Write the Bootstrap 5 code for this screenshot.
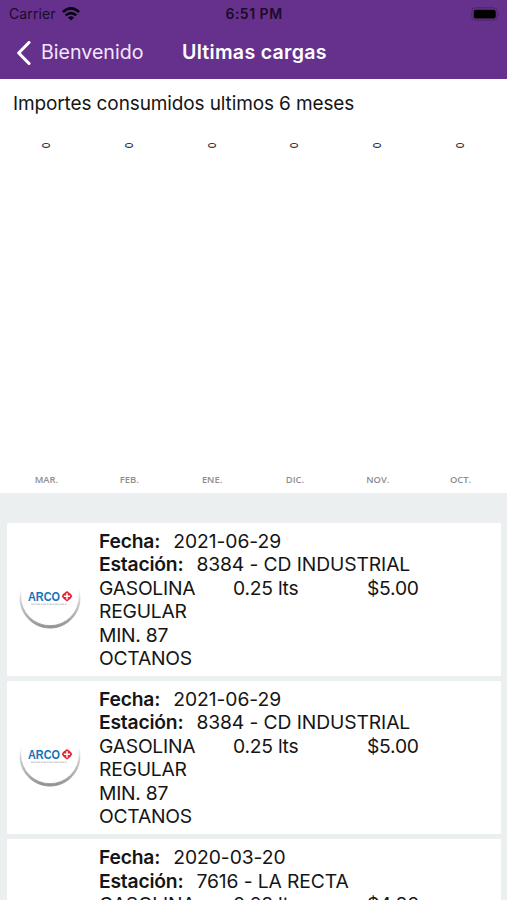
<!DOCTYPE html>
<html lang="es">
<head>
<meta charset="utf-8">
<meta name="viewport" content="width=device-width, initial-scale=1">
<title>Ultimas cargas</title>
<link rel="stylesheet" href="https://cdn.jsdelivr.net/npm/bootstrap@5.3.0/dist/css/bootstrap.min.css">
<style>
body{font-family:Inter,"Liberation Sans",sans-serif;height:900px;background:#ebeff0;color:#151515}
.topbar{background:#65318d;height:79px}
.status{height:27px;font-size:14px;color:#1b0b28;display:grid;grid-template-columns:1fr auto 1fr;padding:0 6px 0 9px}
.carrier{letter-spacing:.1px}
.clock{font-weight:600;letter-spacing:.5px;margin-left:-2px}
.titlebar{height:52px;font-size:19.6px;color:#fff;padding-left:16px}
.back{color:#f3e6fb;width:166px}
.heading{font-weight:600;letter-spacing:.27px}
.chart{height:414px;background:#fff}
.chart-title{font-size:19px;letter-spacing:-.12px;padding:12px 0 0 13px;line-height:25px}
.months{padding:0 5px}
.months-axis{margin-bottom:7px}
.zeros{margin-top:25px;padding:0 6px 0 4px}
.zero{font-size:10.5px;line-height:9px;transform:rotate(90deg) scaleX(.85);color:#333c46;font-weight:600}
.month{font:600 9.4px/12px "Open Sans",sans-serif;color:#8e8e8e}
.loads{padding:29.5px 6px 0 7px;gap:5.4px}
.load{background:#fff;border:0;border-radius:1px;height:153px;flex:none;padding-top:7px}
.logo{width:86px;margin-left:7px;margin-top:31px}
.info{font-size:19.3px;line-height:23.5px;letter-spacing:-.25px;margin-left:-1px}
.info b{font-weight:600;letter-spacing:-.2px;margin-right:13px}
.date{letter-spacing:-.05px}
.station{letter-spacing:-.11px}
.product{width:134px;padding-right:20px}
.liters{width:134px}
</style>
</head>
<body class="overflow-hidden">
<header class="topbar">
  <div class="status align-items-center">
    <div class="d-flex align-items-center"><span class="carrier">Carrier</span>
      <svg width="18" height="14" viewBox="0 0 18 14" fill="none" stroke="#080010" stroke-width="2.5" style="margin-left:6px"><path d="M.9 5Q9-2.2 17.1 5M3.7 8.4Q9 3.8 14.3 8.4"/><path d="M6 10.4Q9 7.9 12 10.4L9 13.6Z" fill="#080010" stroke="none"/></svg></div>
    <div class="clock">6:51 PM</div>
    <div class="text-end lh-1"><svg width="30" height="14" viewBox="0 0 30 14"><rect x=".8" y=".8" width="25.4" height="12.4" rx="3.8" fill="none" stroke="#4c246b"/><rect x="2.7" y="2.7" width="22" height="8.9" rx="2" fill="#000"/><path d="M27.8 5v4q1.5-2 0-4" fill="#4c246b"/></svg></div>
  </div>
  <div class="titlebar d-flex align-items-center">
    <div class="back d-flex align-items-center"><svg class="me-2" width="17" height="24" viewBox="0 0 17 24" fill="none" stroke="#fff" stroke-width="3.1" stroke-linecap="round" stroke-linejoin="round"><path d="M13 1.5L2.7 12L13 22.5"/></svg><span>Bienvenido</span></div>
    <div class="heading">Ultimas cargas</div>
  </div>
</header>
<section class="chart d-flex flex-column">
  <div class="chart-title">Importes consumidos ultimos 6 meses</div>
  <div class="zeros row row-cols-6 g-0 text-center">
    <div class="col"><div class="zero">0</div></div><div class="col"><div class="zero">0</div></div><div class="col"><div class="zero">0</div></div><div class="col"><div class="zero">0</div></div><div class="col"><div class="zero">0</div></div><div class="col"><div class="zero">0</div></div>
  </div>
  <div class="months months-axis row row-cols-6 g-0 text-center mt-auto">
    <div class="col month">MAR.</div><div class="col month">FEB.</div><div class="col month">ENE.</div><div class="col month">DIC.</div><div class="col month">NOV.</div><div class="col month">OCT.</div>
  </div>
</section>
<svg width="0" height="0" class="position-absolute"><defs>
  <linearGradient id="rim" x1="0" y1="0" x2="0" y2="1"><stop offset="0" stop-color="#ddd" stop-opacity="0"/><stop offset=".35" stop-color="#ccc"/><stop offset="1" stop-color="#909090"/></linearGradient>
  <symbol id="arco" viewBox="0 0 72 72">
    <path d="M7.4 28A30 30 0 1 0 64.6 28Q65.2 31 65.2 35.5A29.2 29.2 0 0 1 6.8 35.5Q6.8 31 7.4 28Z" fill="url(#rim)" stroke="url(#rim)" stroke-width=".9"/>
    <text x="14" y="39.5" font-family="Liberation Sans, sans-serif" font-size="12.2" font-weight="700" fill="#1474b8" textLength="32" lengthAdjust="spacingAndGlyphs">ARCO</text>
    <path d="M51 31.6L53 30L55 31.6L57 33L58.2 35.2L57 37.3L55 38.9L53 40.5L51 38.9L49 37.3L47.8 35.2L49 33Z" fill="#e32636"/>
    <path d="M53 32.2v6.2M49.9 35.3h6.2" stroke="#fff" stroke-width="1.5"/>
    <path d="M17 43.2h36" stroke="#b5b5bb" stroke-width=".9" stroke-dasharray="3 .6 2 .4"/>
  </symbol></defs></svg>
<main class="loads d-flex flex-column">
  <article class="load card flex-row">
    <svg class="logo flex-shrink-0" height="72"><use href="#arco" width="72" height="72"/></svg>
    <div class="info"><div><b>Fecha:</b><span class="date">2021-06-29</span></div><div><b>Estación:</b><span class="station">8384 - CD INDUSTRIAL</span></div>
    <div class="d-flex"><div class="product">GASOLINA REGULAR<br>MIN. 87 OCTANOS</div><div class="liters">0.25 lts</div><div>$5.00</div></div></div>
  </article>
  <article class="load card flex-row">
    <svg class="logo flex-shrink-0" height="72"><use href="#arco" width="72" height="72"/></svg>
    <div class="info"><div><b>Fecha:</b><span class="date">2021-06-29</span></div><div><b>Estación:</b><span class="station">8384 - CD INDUSTRIAL</span></div>
    <div class="d-flex"><div class="product">GASOLINA REGULAR<br>MIN. 87 OCTANOS</div><div class="liters">0.25 lts</div><div>$5.00</div></div></div>
  </article>
  <article class="load card flex-row">
    <svg class="logo flex-shrink-0" height="72"></svg>
    <div class="info"><div><b>Fecha:</b><span class="date">2020-03-20</span></div><div><b>Estación:</b><span class="station">7616 - LA RECTA</span></div>
    <div class="d-flex"><div class="product">GASOLINA</div><div class="liters">0.28 lts</div><div>$4.80</div></div></div>
  </article>
</main>
<script src="https://cdn.jsdelivr.net/npm/bootstrap@5.3.0/dist/js/bootstrap.bundle.min.js"></script>
</body>
</html>
